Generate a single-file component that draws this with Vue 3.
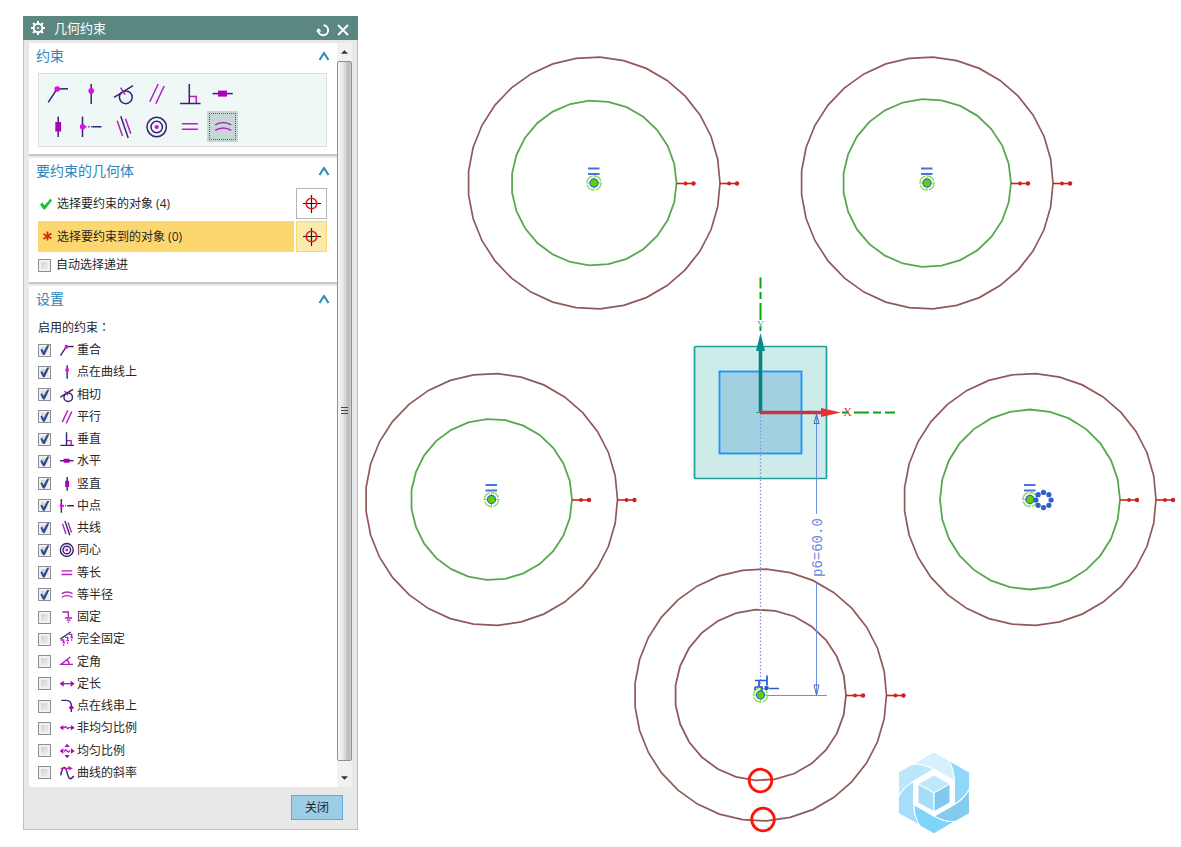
<script setup>
import { ref } from 'vue'

const tools = [
  { id: 'coincident', name: '重合' },
  { id: 'pointOnCurve', name: '点在曲线上' },
  { id: 'tangent', name: '相切' },
  { id: 'parallel', name: '平行' },
  { id: 'perpendicular', name: '垂直' },
  { id: 'horizontal', name: '水平' },
  { id: 'vertical', name: '竖直' },
  { id: 'midpoint', name: '中点' },
  { id: 'collinear', name: '共线' },
  { id: 'concentric', name: '同心' },
  { id: 'equalLength', name: '等长' },
  { id: 'equalRadius', name: '等半径' },
]
const active = ref('equalRadius')

const options = ref([
  ...tools.map((t) => ({ ...t, on: true })),
  { id: 'fixed', name: '固定', on: false },
  { id: 'fullyFixed', name: '完全固定', on: false },
  { id: 'angle', name: '定角', on: false },
  { id: 'length', name: '定长', on: false },
  { id: 'pointOnString', name: '点在线串上', on: false },
  { id: 'nonUniform', name: '非均匀比例', on: false },
  { id: 'uniform', name: '均匀比例', on: false },
  { id: 'slope', name: '曲线的斜率', on: false },
])
const autoStep = ref(false)

const brown = '#8f5a5a'
const green = '#57a84f'
const rings = [
  { x: 594, y: 183, outer: 126, inner: 82.5, sides: 27, color: green },
  { x: 927, y: 183, outer: 126, inner: 84, sides: 27, color: green },
  { x: 491.5, y: 499.5, outer: 126, inner: 80.5, sides: 27, color: green },
  { x: 1030, y: 499.5, outer: 126, inner: 90, sides: 28, color: green },
  { x: 760.5, y: 695, outer: 126, inner: 85.5, sides: 27, color: brown },
]
function facets(x, y, r, n) {
  return Array.from({ length: n }, (_, i) => {
    const a = (i * 2 * Math.PI) / n
    return `${(x + r * Math.cos(a)).toFixed(1)},${(y - r * Math.sin(a)).toFixed(1)}`
  }).join(' ')
}
const beads = Array.from({ length: 8 }, (_, i) => ({
  x: 1043.5 + 7.6 * Math.cos((i * Math.PI) / 4),
  y: 500 + 7.6 * Math.sin((i * Math.PI) / 4),
}))
const blades = ['#90d8f9', '#83ccf0', '#80d4fb', '#a6def9', '#bbe7fc', '#d8effc']
</script>

<template>
  <div class="page">
    <svg class="sprite" aria-hidden="true">
      <symbol id="coincident" viewBox="0 0 24 24"><path class="d" d="M2.2 20.3 11 7l11-.2" /><circle class="m" cx="11.2" cy="7" r="2.8" /></symbol>
      <symbol id="pointOnCurve" viewBox="0 0 24 24"><path class="d" d="M12.2 2v20" /><circle class="m" cx="12.2" cy="8.9" r="2.8" /></symbol>
      <symbol id="tangent" viewBox="0 0 24 24"><circle class="d" cx="13.8" cy="15.3" r="6.4" /><path class="d" d="M2 15.3 21 3.7" /><path class="p" d="m8.500 5.700 4.700 7" /></symbol>
      <symbol id="parallel" viewBox="0 0 24 24"><path class="p" d="M4.8 19.7 13.2 2M10.8 21.7 19.2 4" /></symbol>
      <symbol id="perpendicular" viewBox="0 0 24 24"><path class="p" d="M12 14.4h6.3v7" /><path class="d" d="M11.3 2v19.5M2 21.5h20.5" /></symbol>
      <symbol id="horizontal" viewBox="0 0 24 24"><path class="d" d="M1.5 11.6h20.3" /><path class="f" d="M7 8.600h9v6H7z" /></symbol>
      <symbol id="vertical" viewBox="0 0 24 24"><path class="d" d="M12.2 1.5V22" /><path class="f" d="M9.300 7h5.800v9.500H9.300z" /></symbol>
      <symbol id="midpoint" viewBox="0 0 24 24"><path class="d" d="M3.5 1.5V22M13.5 11.7h9" /><path class="dot" d="M6 11.7h7.5" /><circle class="m" cx="3.6" cy="11.7" r="2.7" /></symbol>
      <symbol id="collinear" viewBox="0 0 24 24"><path class="p" d="m5.2 5.7 5.3 15.3M13.5 3.7l5.3 15" /><path class="d" d="m8.8 1.3 7.4 21.7" /></symbol>
      <symbol id="concentric" viewBox="0 0 24 24"><circle class="d" cx="11.7" cy="12" r="9.7" /><circle class="d" cx="11.7" cy="12" r="5.7" /><circle class="m" cx="11.7" cy="12" r="2.1" /></symbol>
      <symbol id="equalLength" viewBox="0 0 24 24"><path class="p" d="M3.8 8.8h16M3.8 14.2h16" /></symbol>
      <symbol id="equalRadius" viewBox="0 0 24 24"><path class="p" d="M4.2 9.8q8-4.8 16 0M4.2 15.4q8-4.8 16 0" /></symbol>
      <symbol id="fixed" viewBox="0 0 24 24"><path class="p" d="M5 4.5h9v9M9 13.5h10.5M11.5 16.7H17M13.2 19.7h2.2" /></symbol>
      <symbol id="fullyFixed" viewBox="0 0 24 24"><path class="d" d="M2 12 17.500 1.500" /><path class="p" d="M2.500 13.500h4.500v4M5 17.500h4M6 21h2M9 9.500h4v4M11 14.500h4M12 18h2M15 5h4v4M17 10h4M18 13.500h2" /></symbol>
      <symbol id="angle" viewBox="0 0 24 24"><path class="p" d="M17 4.500 3 15.500h18M11.500 9q4 2 3.500 6.500" /></symbol>
      <symbol id="length" viewBox="0 0 24 24"><path class="p" d="M4 11.500h16" /><path class="f" d="m1 11.500 6-4.500v9zM23.500 11.500l-6-4.500v9z" /></symbol>
      <symbol id="pointOnString" viewBox="0 0 24 24"><path class="d" d="M3.500 3.500h7q8 0 8 8v9.500" /><path class="f" d="m18.500 10.500 4 4-4 4-4-4z" /></symbol>
      <symbol id="nonUniform" viewBox="0 0 24 24"><path class="f" d="m1 11.500 5.500-4v8zM23.500 11.500 18 7.500v8z" /><path class="p" d="M6 11.500h2l2-1.500 3 3 2-1.500h3" /></symbol>
      <symbol id="uniform" viewBox="0 0 24 24"><path class="f" d="m1 12 5.500-4v8zM23.500 12 18 8v8zM12.200 1l4 5h-8zM12.200 23l4-5h-8z" /><path class="p" d="m7.500 12.500 2.500-2 4 3 2.500-2" /></symbol>
      <symbol id="slope" viewBox="0 0 24 24"><path class="d" d="M2.500 15.500C4 8 6 3 8.500 4c4 1.500 4 16 8 16.500 2 .2 3.500-1 5.500-4" /><path class="p" d="M2.500 5h14M14 2.500 18.500 5 14 7" /></symbol>
      <symbol id="chevron" viewBox="0 0 12 10"><path class="chev" d="M1.500 9 6 2 10.500 9" /></symbol>
      <symbol id="target" viewBox="0 0 20 20"><path class="cross" d="M1 9.500h18M9.500 1v18" /><circle class="aim" cx="9.5" cy="9.5" r="5.3" /></symbol>
    </svg>

    <section class="dialog" aria-label="几何约束">
      <header class="bar">
        <svg class="gear" viewBox="0 0 16 16"><circle cx="8" cy="8" r="4.300" /><path d="M8 1v2.500M8 12.500V15M1 8h2.500M12.500 8H15M3.050 3.050l1.800 1.800M11.150 11.150l1.800 1.800M3.050 12.950l1.800-1.800M11.150 4.850l1.800-1.800" /><circle class="hub" cx="8" cy="8" r="1" /></svg>
        <h1>几何约束</h1>
        <button class="plain" aria-label="重置"><svg viewBox="0 0 14 14"><path d="M7.500 2.200A5 5 0 1 1 2.200 7.500" /><path class="solid" d="M0 8.500 2.500 5l3 3.500z" /></svg></button>
        <button class="plain" aria-label="关闭对话框"><svg viewBox="0 0 14 14"><path d="m2 2 10 10M12 2 2 12" /></svg></button>
      </header>

      <div class="body">
        <div class="pane">
          <section class="group">
            <h2>约束<button class="plain fold" aria-label="折叠约束"><svg><use href="#chevron" /></svg></button></h2>
            <div class="palette">
              <button v-for="t in tools" :key="t.id" class="tool" :class="{ active: active === t.id }" :aria-label="t.name" @click="active = t.id">
                <svg class="icon"><use :href="'#' + t.id" /></svg>
              </button>
            </div>
          </section>

          <section class="group">
            <h2>要约束的几何体<button class="plain fold" aria-label="折叠要约束的几何体"><svg><use href="#chevron" /></svg></button></h2>
            <div class="pick">
              <div class="what">
                <svg class="mark" viewBox="0 0 14 14"><path class="tick" d="M1 7.500 3.500 5.500 5.500 8.500 11.500 1.500 13 3.500 6 12.500H4.500z" /></svg>
                <span>选择要约束的对象 (4)</span>
              </div>
              <button class="aimer" aria-label="选择要约束的对象"><svg><use href="#target" /></svg></button>
            </div>
            <div class="pick current">
              <div class="what">
                <svg class="mark star" viewBox="0 0 14 14"><path d="M8.500 1.500v9M4.500 4l8 4.500M12.500 3.500l-8 5.500" /></svg>
                <span>选择要约束到的对象 (0)</span>
              </div>
              <button class="aimer" aria-label="选择要约束到的对象"><svg><use href="#target" /></svg></button>
            </div>
            <label class="auto"><input v-model="autoStep" type="checkbox" />自动选择递进</label>
          </section>

          <section class="group settings">
            <h2>设置<button class="plain fold" aria-label="折叠设置"><svg><use href="#chevron" /></svg></button></h2>
            <p>启用的约束<span class="colon">：</span></p>
            <div class="list">
              <label v-for="o in options" :key="o.id">
                <input v-model="o.on" type="checkbox" />
                <svg class="icon small"><use :href="'#' + o.id" /></svg>
                <span>{{ o.name }}</span>
              </label>
            </div>
          </section>
        </div>
        <div class="scroll">
          <button class="plain step" aria-label="向上滚动"><svg viewBox="0 0 8 4"><path d="M0 4 4 0l4 4z" /></svg></button>
          <div class="thumb"><i></i><i></i><i></i></div>
          <button class="plain step down" aria-label="向下滚动"><svg viewBox="0 0 8 4"><path d="M0 0h8L4 4z" /></svg></button>
        </div>
      </div>

      <footer><button class="close">关闭</button></footer>
    </section>

    <svg class="canvas" viewBox="358 0 823 847" preserveAspectRatio="xMinYMin meet" role="img" aria-label="草图">
      <rect x="694.500" y="346.500" width="132" height="132" rx="1" fill="#cdebe9" stroke="#1f9e9b" stroke-width="1.700" />
      <rect x="719.500" y="371.500" width="82" height="82" fill="#a3d0e0" stroke="#1595ff" stroke-width="1.800" />

      <g v-for="(c, i) in rings" :key="i" fill="none">
        <polygon :points="facets(c.x, c.y, c.outer, 33)" :stroke="brown" stroke-width="1.700" />
        <polygon :points="facets(c.x, c.y, c.inner, c.sides)" :stroke="c.color" stroke-width="1.800" />
        <g v-for="r in [c.inner, c.outer]" :key="r" fill="#cc2222">
          <path :d="`M${c.x + r} ${c.y + 0.5}h18`" stroke="#cc2222" stroke-width="1.600" />
          <circle :cx="c.x + r + 9" :cy="c.y + 0.5" r="1.900" />
          <circle :cx="c.x + r + 17" :cy="c.y + 0.5" r="2.200" />
        </g>
      </g>

      <path d="M760.500 413v282" stroke="#7f95e0" stroke-width="1.300" stroke-dasharray="1.500 2" />
      <g stroke="#6f8fe0" fill="none">
        <path d="M816.500 413v101M816.500 583v112M766 695.500h61" />
        <path d="m814 423.500 2.500-9 2.500 9zM814 685l2.500 10 2.500-10z" stroke="#4468c8" />
      </g>
      <text class="dim" transform="translate(822 577) rotate(-90)">p6=60.0</text>

      <g stroke="#0ba50b" stroke-width="2" fill="none">
        <path d="M760.500 277.500v11M760.500 292v7M760.500 303v17M760.500 326v5M842 412.500h7M854 412.500h15M873 412.500h8M885 412.500h10" />
      </g>
      <text class="axis ay" x="760.500" y="328">Y</text>
      <text class="axis ax" x="847.500" y="416">X</text>
      <path d="M760.500 412V350" stroke="#068381" stroke-width="3.600" />
      <path d="m760.500 333 4.500 18h-9z" fill="#008f8c" />
      <path d="M756 412.500h5" stroke="#1f9e9b" />
      <path d="M760 412.500h62" stroke="#c7363c" stroke-width="3.600" />
      <path d="m841 412.500-20-4.500v9z" fill="#e23232" />

      <g v-for="(c, i) in rings" :key="'c' + i">
        <path v-if="i < 4" :d="`M${c.x - 6} ${c.y - 14.5}h11.500M${c.x - 6} ${c.y - 9}h11.500`" stroke="#4774dc" stroke-width="2" />
        <circle :cx="c.x" :cy="c.y" r="7" fill="none" stroke="#8fdc58" stroke-width="1.400" stroke-dasharray="9 2" />
        <path :d="`M${c.x - 8} ${c.y}h16M${c.x} ${c.y - 8}v16`" stroke="#8fdc58" />
        <circle :cx="c.x" :cy="c.y" r="4.700" fill="#2f68cf" />
        <circle :cx="c.x" :cy="c.y" r="3.500" fill="#5fd000" />
      </g>
      <circle v-for="(b, i) in beads" :key="'b' + i" :cx="b.x" :cy="b.y" r="2.600" fill="#2f5fcc" />
      <path d="M755 680.500h12M767 675.500v10M755 687h7v4M755 687v3M759 681v6" stroke="#2a5bd0" stroke-width="1.700" fill="none" />
      <path d="M769 688.500h10" stroke="#2a5bd0" stroke-width="1.500" />
      <circle cx="766.500" cy="688" r="2.300" fill="#2a5bd0" />

      <g fill="none" stroke="#ff1408" stroke-width="2.800">
        <circle cx="760.500" cy="780.500" r="11.300" />
        <circle cx="763" cy="819.500" r="11.300" />
      </g>

      <g transform="translate(885 740) scale(.3333)" stroke="#fff" stroke-width="3" stroke-linejoin="round">
        <path v-for="(f, i) in blades" :key="f" :fill="f" :transform="`rotate(${i * 60} 147 158.500)`" d="M190 61 254 97V147Q238 176 208 193V123Q208 88 190 61z" />
        <path d="m147 88 61 35v70l-61 35-61-35v-70z" fill="#fff" />
        <path d="m147 105 48 27-48 27-48-27z" fill="#bfe8fc" />
        <path d="m99 132 48 27v56l-48-27z" fill="#a5dcf8" />
        <path d="m195 132-48 27v56l48-27z" fill="#81caef" />
      </g>
    </svg>
  </div>
</template>

<style>
body { background: #fff; }
</style>

<style scoped>
.page {
  display: flex;
  min-height: 100vh;
  font: 12px/16px "Open Sans", "Noto Sans CJK SC", sans-serif;
  color: #262626;
}
* { box-sizing: border-box; }
button { font: inherit; color: inherit; padding: 0; cursor: pointer; }
.sprite { position: absolute; width: 0; height: 0; }
.canvas { flex: 1; min-width: 0; align-self: flex-start; display: block; }

.dialog {
  flex: 0 0 335px;
  margin: 16px 0 17px 23px;
  display: flex;
  flex-direction: column;
  background: #e8e8e8;
  border: 1px solid #bfbfbf;
  border-top: 0;
}
.bar {
  display: flex;
  align-items: center;
  height: 24px;
  margin: 0 -1px;
  padding: 0 8px 0 7px;
  background: #5b8781;
  color: #fff;
}
.bar h1 { flex: 1; margin: 0 0 0 8px; font-size: 13px; font-weight: 400; line-height: 22px; }
.gear { width: 16px; height: 16px; fill: none; stroke: #fff; stroke-width: 2; }
.gear .hub { fill: #fff; stroke: none; }
.plain { border: 0; background: none; display: flex; align-items: center; justify-content: center; }
.bar .plain { margin-left: 6px; padding-top: 3px; }
.bar .plain svg { width: 14px; height: 14px; fill: none; stroke: #fff; stroke-width: 2; }
.bar .plain .solid { fill: #fff; stroke: none; }

.body { flex: 1; display: flex; padding: 3px 5px 0; }
.pane { flex: 1; display: flex; flex-direction: column; }
.group {
  background: #fff;
  padding: 0 10px 0 9px;
  border-bottom: 2px solid #c8c8c8;
  margin-bottom: 2px;
}
.group h2 {
  display: flex;
  align-items: center;
  justify-content: space-between;
  height: 30px;
  margin: 0 -3px 0 -2px;
  padding-bottom: 4px;
  font-size: 14px;
  font-weight: 400;
  color: #2b85ba;
}
.fold svg { width: 12px; height: 10px; }
.chev { fill: none; stroke: #2787b4; stroke-width: 2; }

.palette {
  display: grid;
  grid-template-columns: repeat(auto-fill, 31px);
  gap: 2px;
  padding: 4px 80px 4px 3px;
  margin-bottom: 7px;
  background: #f0f7f7;
  border: 1px solid #d9dfdf;
}
.tool { height: 31px; border: 0; background: none; display: flex; align-items: center; justify-content: center; }
.tool.active { background: #c5d8d5; outline: 1px dotted #7a3f86; outline-offset: -3px; }
.icon { width: 24px; height: 24px; stroke-width: 1.5; }
.icon.small { width: 16px; height: 16px; stroke-width: 2.1; }
.d { fill: none; stroke: #35246f; }
.p { fill: none; stroke: #b51fbd; }
.dot { fill: none; stroke: #55508a; stroke-dasharray: 1.500 1.500; }
.m { fill: #e00be8; stroke: none; }
.f { fill: #ae00b4; stroke: none; }

.pick { display: flex; gap: 2px; margin-bottom: 2px; }
.what { flex: 1; display: flex; align-items: center; gap: 4px; padding-left: 1px; }
.mark { width: 14px; height: 14px; }
.tick { fill: #19c231; }
.star path { fill: none; stroke: #dd2a0c; stroke-width: 1.8; }
.aimer { width: 31px; height: 31px; display: flex; align-items: center; justify-content: center; background: #fff; border: 1px solid #b5b5b5; }
.aimer svg { width: 20px; height: 20px; }
.aim { fill: none; stroke: #dc1f1f; stroke-width: 1.6; }
.cross { fill: none; stroke: #1c1c1c; stroke-width: 1.2; }
.current .what { background: #fcd76f; }
.current .aimer { background: #faebad; border-color: #fcd76f; }
.auto { display: flex; align-items: center; gap: 5px; height: 28px; padding-bottom: 6px; }

input[type="checkbox"] {
  appearance: none;
  width: 13px;
  height: 13px;
  margin: 0;
  border: 1px solid #8b8f92;
  background: linear-gradient(135deg, #c5c9cd, #f8f8f8);
  box-shadow: inset 0 0 0 2px #f1f1f1;
}
input[type="checkbox"]:checked::after {
  content: "";
  display: block;
  width: 11px;
  height: 11px;
  background: #334b8e;
  clip-path: polygon(12% 46%, 28% 38%, 42% 62%, 74% 6%, 94% 6%, 52% 94%, 36% 94%);
}

.settings { flex: 1; display: flex; flex-direction: column; border-bottom: 0; margin-bottom: 0; }
.settings p { margin: 2px 0; line-height: 18px; }
.colon { font-family: "Noto Sans CJK TC", sans-serif; }
.list { flex: 1; display: grid; grid-auto-rows: 1fr; padding-bottom: 3px; }
.list label { display: flex; align-items: center; gap: 2px; }
.list input { margin-right: 6px; }

.scroll { flex: 0 0 15px; display: flex; flex-direction: column; background: #f1f1f1; }
.step { height: 18px; }
.step.down { height: 26px; padding-top: 8px; }
.step svg { width: 7px; height: 4px; fill: #333; }
.thumb {
  flex: 1;
  display: flex;
  flex-direction: column;
  align-items: center;
  justify-content: center;
  gap: 1px;
  border: 1px solid #8f8f8f;
  border-radius: 2px;
  background: linear-gradient(90deg, #f7f7f7, #e6e6e8 40%, #b9b9be 80%, #cfcfd2);
}
.thumb i { width: 7px; height: 2px; border-top: 1px solid #444; }

footer { display: flex; justify-content: flex-end; padding: 8px 14px 9px; }
.close { width: 52px; height: 25px; background: #9bcde6; border: 1px solid #58addb; }

.dim { font: 14px "Liberation Mono", monospace; fill: #6488dc; }
.axis { font: 10px "Liberation Serif", serif; text-anchor: middle; }
.ay { fill: #52aaa6; }
.ax { fill: #d05050; font-size: 12px; }
</style>
